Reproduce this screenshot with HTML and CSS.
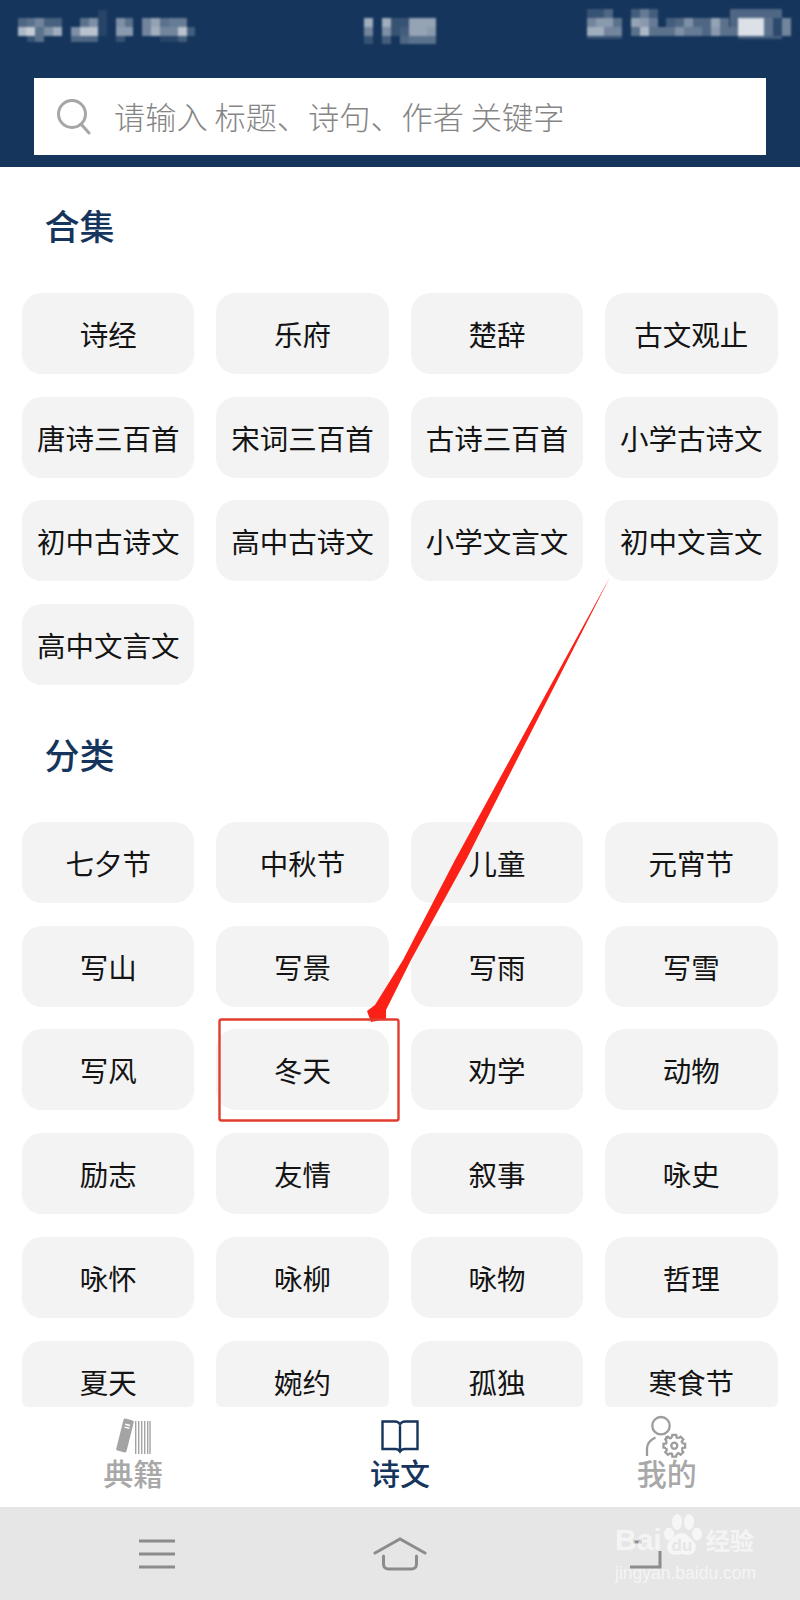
FILE: index.html
```html
<!DOCTYPE html>
<html lang="zh-CN">

<head>
  <meta charset="UTF-8">
  <meta name="viewport" content="width=device-width, initial-scale=1.0">
  <title>诗文</title>
  <link rel="stylesheet" href="styles.css">
</head>

<body>
  <div class="page">
    <header class="top">
      <!-- status bar, blurred out in the screenshot -->
      <svg class="status" viewBox="0 0 800 45" fill="#fff">
        <g>
          <rect x="18" y="18" width="9" height="9" opacity=".25"/><rect x="27" y="18" width="8" height="9" opacity=".3"/><rect x="35" y="18" width="9" height="9" opacity=".4"/><rect x="44" y="18" width="18" height="9" opacity=".22"/><rect x="80" y="18" width="9" height="9" opacity=".3"/><rect x="89" y="18" width="9" height="9" opacity=".45"/><rect x="98" y="10" width="9" height="26" opacity=".08"/>
          <rect x="116" y="18" width="9" height="9" opacity=".45"/><rect x="125" y="18" width="8" height="9" opacity=".3"/><rect x="142" y="18" width="9" height="9" opacity=".4"/><rect x="151" y="18" width="9" height="9" opacity=".55"/><rect x="160" y="18" width="9" height="9" opacity=".3"/><rect x="169" y="18" width="18" height="9" opacity=".35"/>
          <rect x="18" y="27" width="8" height="9" opacity=".65"/><rect x="26" y="27" width="9" height="9" opacity=".75"/><rect x="35" y="27" width="9" height="9" opacity=".3"/><rect x="44" y="27" width="9" height="9" opacity=".45"/><rect x="53" y="27" width="9" height="9" opacity=".6"/><rect x="71" y="27" width="9" height="9" opacity=".45"/><rect x="80" y="27" width="18" height="9" opacity=".7"/>
          <rect x="116" y="27" width="17" height="9" opacity=".5"/><rect x="142" y="27" width="9" height="9" opacity=".4"/><rect x="151" y="27" width="9" height="9" opacity=".6"/><rect x="160" y="27" width="18" height="9" opacity=".4"/><rect x="178" y="27" width="9" height="9" opacity=".7"/><rect x="187" y="27" width="8" height="9" opacity=".2"/>
          <rect x="27" y="36" width="8" height="6" opacity=".15"/><rect x="35" y="36" width="9" height="6" opacity=".3"/><rect x="71" y="36" width="27" height="6" opacity=".25"/><rect x="116" y="36" width="9" height="6" opacity=".15"/><rect x="160" y="36" width="18" height="6" opacity=".08"/><rect x="178" y="36" width="9" height="6" opacity=".2"/>
        </g>
        <g>
          <rect x="364" y="18" width="9" height="9" opacity=".6"/><rect x="382" y="18" width="9" height="9" opacity=".6"/><rect x="391" y="18" width="18" height="9" opacity=".15"/><rect x="409" y="18" width="27" height="9" opacity=".55"/>
          <rect x="364" y="27" width="9" height="9" opacity=".4"/><rect x="382" y="27" width="9" height="9" opacity=".45"/><rect x="391" y="27" width="9" height="9" opacity=".15"/><rect x="400" y="27" width="9" height="9" opacity=".2"/><rect x="409" y="27" width="18" height="9" opacity=".55"/><rect x="427" y="27" width="9" height="9" opacity=".5"/>
          <rect x="364" y="36" width="9" height="8" opacity=".15"/><rect x="382" y="36" width="9" height="8" opacity=".2"/><rect x="400" y="36" width="9" height="8" opacity=".25"/><rect x="409" y="36" width="27" height="8" opacity=".3"/>
        </g>
        <g>
          <rect x="587" y="9" width="17" height="9" opacity=".15"/><rect x="604" y="9" width="9" height="9" opacity=".25"/><rect x="631" y="9" width="9" height="9" opacity=".2"/><rect x="640" y="9" width="9" height="9" opacity=".35"/><rect x="649" y="9" width="9" height="9" opacity=".2"/><rect x="730" y="9" width="52" height="9" opacity=".25"/>
          <rect x="587" y="18" width="9" height="9" opacity=".4"/><rect x="596" y="18" width="17" height="9" opacity=".5"/><rect x="613" y="18" width="9" height="9" opacity=".3"/><rect x="631" y="18" width="9" height="9" opacity=".55"/><rect x="640" y="18" width="9" height="9" opacity=".5"/><rect x="649" y="18" width="9" height="9" opacity=".35"/><rect x="666" y="18" width="9" height="9" opacity=".2"/><rect x="675" y="18" width="9" height="9" opacity=".25"/><rect x="684" y="18" width="9" height="9" opacity=".45"/><rect x="693" y="18" width="18" height="9" opacity=".25"/><rect x="711" y="18" width="9" height="9" opacity=".55"/><rect x="720" y="18" width="9" height="9" opacity=".3"/><rect x="730" y="18" width="8" height="9" opacity=".25"/>
          <rect x="587" y="27" width="17" height="9" opacity=".6"/><rect x="604" y="27" width="18" height="9" opacity=".4"/><rect x="631" y="27" width="9" height="9" opacity=".3"/><rect x="640" y="27" width="9" height="9" opacity=".65"/><rect x="649" y="27" width="9" height="9" opacity=".3"/><rect x="658" y="27" width="17" height="9" opacity=".3"/><rect x="675" y="27" width="9" height="9" opacity=".45"/><rect x="684" y="27" width="18" height="9" opacity=".35"/><rect x="702" y="27" width="9" height="9" opacity=".25"/><rect x="711" y="27" width="9" height="9" opacity=".5"/><rect x="720" y="27" width="18" height="9" opacity=".3"/>
          <rect x="738" y="18" width="26" height="18" opacity=".85"/><rect x="764" y="18" width="9" height="18" opacity=".3"/><rect x="773" y="18" width="9" height="18" opacity=".1"/><rect x="782" y="18" width="9" height="18" opacity=".4"/>
          <rect x="587" y="36" width="35" height="3" opacity=".15"/><rect x="738" y="36" width="44" height="3" opacity=".2"/>
        </g>
      </svg>
      <div class="search">
        <svg class="search-icon" viewBox="0 0 36 36" fill="none" stroke="#a6a6a6" stroke-width="3" stroke-linecap="round">
          <circle cx="16" cy="15" r="13.5"/>
          <path d="M25 25l8 9"/>
        </svg>
        <span class="search-text">请输入 标题、诗句、作者 关键字</span>
      </div>
    </header>

    <main class="content">
      <h2 class="group-title">合集</h2>
      <div class="chips">
        <div class="chip">诗经</div>
        <div class="chip">乐府</div>
        <div class="chip">楚辞</div>
        <div class="chip">古文观止</div>
        <div class="chip">唐诗三百首</div>
        <div class="chip">宋词三百首</div>
        <div class="chip">古诗三百首</div>
        <div class="chip">小学古诗文</div>
        <div class="chip">初中古诗文</div>
        <div class="chip">高中古诗文</div>
        <div class="chip">小学文言文</div>
        <div class="chip">初中文言文</div>
        <div class="chip">高中文言文</div>
      </div>

      <h2 class="group-title group-second">分类</h2>
      <div class="chips">
        <div class="chip">七夕节</div>
        <div class="chip">中秋节</div>
        <div class="chip">儿童</div>
        <div class="chip">元宵节</div>
        <div class="chip">写山</div>
        <div class="chip">写景</div>
        <div class="chip">写雨</div>
        <div class="chip">写雪</div>
        <div class="chip">写风</div>
        <div class="chip">冬天</div>
        <div class="chip">劝学</div>
        <div class="chip">动物</div>
        <div class="chip">励志</div>
        <div class="chip">友情</div>
        <div class="chip">叙事</div>
        <div class="chip">咏史</div>
        <div class="chip">咏怀</div>
        <div class="chip">咏柳</div>
        <div class="chip">咏物</div>
        <div class="chip">哲理</div>
        <div class="chip chip-cut">夏天</div>
        <div class="chip chip-cut">婉约</div>
        <div class="chip chip-cut">孤独</div>
        <div class="chip chip-cut">寒食节</div>
      </div>
    </main>

    <nav class="tabs">
      <div class="tab">
        <svg class="tab-icon" width="40" height="40" viewBox="0 0 40 40" fill="#a4a4a4">
          <g transform="rotate(14 12 19.5)">
            <rect x="6.7" y="3" width="10.6" height="33" rx="1.5"/>
            <path d="M9.5 8.5h5M9.5 11.5h5" stroke="#fff" stroke-width="1.5"/>
          </g>
          <g stroke="#a4a4a4" stroke-width="1.4">
            <path d="M22.7 5v33M25.7 5v33M28.7 5v33M31.7 5v33M34.7 5v33M37 5v33"/>
          </g>
        </svg>
        <span class="tab-label">典籍</span>
      </div>
      <div class="tab tab-active">
        <svg class="tab-icon" width="40" height="40" viewBox="0 0 40 40" fill="none" stroke="#15355c" stroke-width="2.4">
          <path d="M2.5 5.500h12c3 0 5.500 1.500 5.500 4 0-2.500 2.500-4 5.500-4h12v27.500h-13c-2 0-3.500 1-4.500 2.500-1-1.500-2.500-2.500-4.500-2.500h-13z"/>
          <path d="M20 9.500v26"/>
        </svg>
        <span class="tab-label">诗文</span>
      </div>
      <div class="tab">
        <svg class="tab-icon" width="44" height="40" viewBox="0 0 44 40" fill="none" stroke="#9c9c9c" stroke-width="2.3" overflow="visible">
          <circle cx="16" cy="9.700" r="8.700"/>
          <path d="M2 40v-7c0-5 3-9 8.500-11.500M20.300 20.700l3.300 1.600"/>
          <g transform="translate(29.300 29.700)">
            <circle r="3"/>
            <path id="tooth" d="M8.170-2.340L10.830-1.910V1.910L8.170 2.340A8.500 8.500 0 0 1 7.430 4.120"/>
            <use href="#tooth" transform="rotate(45)"/>
            <use href="#tooth" transform="rotate(90)"/>
            <use href="#tooth" transform="rotate(135)"/>
            <use href="#tooth" transform="rotate(180)"/>
            <use href="#tooth" transform="rotate(225)"/>
            <use href="#tooth" transform="rotate(270)"/>
            <use href="#tooth" transform="rotate(315)"/>
          </g>
        </svg>
        <span class="tab-label">我的</span>
      </div>
    </nav>

    <footer class="sys-nav">
      <svg class="sys-menu" width="38" height="30" viewBox="0 0 38 30" stroke="#8c8c8c" stroke-width="3">
        <path d="M1 2h36M1 15h36M1 28h36"/>
      </svg>
      <svg class="sys-home" width="54" height="34" viewBox="0 0 54 34" fill="none" stroke="#8c8c8c" stroke-width="3" stroke-linecap="round">
        <path d="M2 16L27 2l25 14"/>
        <path d="M10.500 19v8c0 3 2 5 5 5h23c3 0 5-2 5-5v-8"/>
      </svg>
      <svg class="sys-back" width="34" height="30" viewBox="0 0 34 30" fill="none" stroke="#8c8c8c" stroke-width="3">
        <path d="M2 28h30V12M5 3h9"/>
      </svg>

      <!-- site watermark stamped on the screenshot -->
      <div class="watermark">
        <div class="wm-row">
          <span class="wm-bai">Bai</span>
          <svg class="wm-paw" width="42" height="44" viewBox="0 0 42 44" fill="#fff" fill-opacity=".62">
            <ellipse cx="8" cy="20" rx="5" ry="6.500"/>
            <ellipse cx="16" cy="8" rx="5" ry="8"/>
            <ellipse cx="28" cy="8" rx="5" ry="8"/>
            <ellipse cx="36" cy="20" rx="5" ry="6.500"/>
            <path d="M21 19c5 0 8 5 12 9 4 5 1 13-6 13-3 0-4-1-6-1s-4 1-7 1c-7 0-10-8-6-13 4-4 7-9 13-9z"/>
            <text class="wm-du" x="21" y="37" text-anchor="middle">du</text>
          </svg>
          <span class="wm-cn">经验</span>
        </div>
        <div class="wm-url">jingyan.baidu.com</div>
      </div>
    </footer>

    <!-- red marks someone drew over the screenshot -->
    <svg class="marks" width="800" height="1600" viewBox="0 0 800 1600">
      <path d="M610 577L466 860L411 960L386 1010L386 1019L371 1022L367 1011L375 1005L403 960L455 860z" fill="#fb2116"/>
      <rect x="219.500" y="1019.500" width="179" height="101" rx="2" fill="none" stroke="#e23c2e" stroke-width="2.400"/>
    </svg>
  </div>
</body>

</html>
```

FILE: styles.css
```css
body {
  margin: 0;
  font-family: "Noto Sans CJK SC", "Noto Sans", sans-serif;
  background-color: #ffffff;
  color: #141414;
}

.page {
  position: relative;
  width: 800px;
  height: 1600px;
  display: flex;
  flex-direction: column;
  overflow: hidden;
}

.top {
  height: 167px;
  flex-shrink: 0;
  background-color: #15355c;
}

.status {
  display: block;
  width: 800px;
  height: 45px;
  filter: blur(1px);
}

.search {
  height: 77px;
  margin: 33px 34px 0;
  padding-left: 22px;
  display: flex;
  align-items: center;
  background-color: #ffffff;
}

.search-icon {
  width: 36px;
  height: 36px;
  margin-right: 22px;
}

.search-text {
  margin-top: -2px;
  font-size: 31.200px;
  font-weight: 300;
  color: #858585;
  white-space: pre;
}

.content {
  flex: 1;
  min-height: 0;
  overflow: hidden;
  padding: 0 22.500px 0 22px;
}

.group-title {
  height: 118px;
  margin: 0 0 8px;
  padding-left: 22.500px;
  font-size: 35px;
  font-weight: 500;
  line-height: 116px;
  color: #15355c;
}

.group-second {
  margin-top: 11px;
}

.chips {
  display: grid;
  grid-template-columns: repeat(4, 1fr);
  grid-auto-rows: 81px;
  gap: 22.700px 22px;
}

.chip {
  display: flex;
  align-items: center;
  justify-content: center;
  background-color: #f3f3f3;
  border-radius: 20px;
  font-size: 28.500px;
  white-space: nowrap;
}

/* last row is cut off by the tab bar */
.chip-cut {
  height: 66px;
  padding-top: 15px;
  box-sizing: border-box;
  border-radius: 20px 20px 6px 6px;
  align-items: flex-start;
  line-height: 51px;
}

.tabs {
  height: 100px;
  flex-shrink: 0;
  display: grid;
  grid-template-columns: repeat(3, 1fr);
  background-color: #ffffff;
}

.tab {
  padding-top: 9px;
  display: flex;
  flex-direction: column;
  align-items: center;
}

.tab-icon {
  display: block;
}

.tab-label {
  margin-top: -2px;
  font-size: 30px;
  font-weight: 500;
  line-height: 37px;
  color: #a8a8a8;
}

.tab-active .tab-label {
  color: #15355c;
}

.sys-nav {
  position: relative;
  height: 93px;
  flex-shrink: 0;
  padding: 0 138px;
  display: grid;
  grid-template-columns: 1fr auto 1fr;
  align-items: center;
  background-color: #e6e6e6;
}

.sys-back {
  justify-self: end;
}

.watermark {
  position: absolute;
  left: 615px;
  top: 7px;
  color: rgba(255, 255, 255, 0.62);
}

.wm-row {
  display: flex;
  align-items: flex-end;
}

.wm-bai {
  font-family: "Liberation Sans", sans-serif;
  font-size: 30px;
  font-weight: 700;
  line-height: 34px;
}

.wm-paw {
  display: block;
  margin: 0 0 -1px -1px;
}

.wm-du {
  font-family: "Liberation Sans", sans-serif;
  font-size: 17px;
  font-weight: 700;
  fill: #e6e6e6;
  fill-opacity: 1;
}

.wm-cn {
  margin-left: 3px;
  font-size: 24px;
  font-weight: 700;
  line-height: 34px;
}

.wm-url {
  margin-top: 5px;
  font-family: "Liberation Sans", sans-serif;
  font-size: 17.500px;
  line-height: 22px;
  white-space: nowrap;
}

.marks {
  position: absolute;
  left: 0;
  top: 0;
  pointer-events: none;
}
```
